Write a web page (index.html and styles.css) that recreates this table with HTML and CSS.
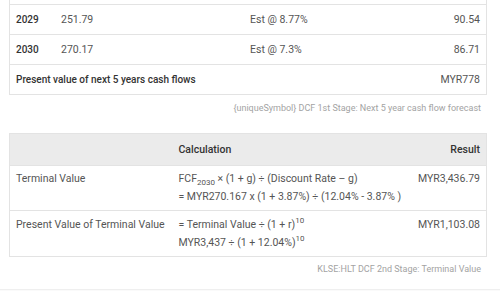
FILE: index.html
```html
<!DOCTYPE html>
<html>
<head>
<meta charset="utf-8">
<link rel="stylesheet" href="styles.css">
</head>
<body>
<div class="page">
  <div class="box">
    <table class="t1">
      <colgroup><col class="w1"><col class="w2"><col class="w3"><col></colgroup>
      <tr><td class="yr">2029</td><td class="val">251.79</td><td class="est">Est @ 8.77%</td><td class="num">90.54</td></tr>
      <tr><td class="yr">2030</td><td class="val">270.17</td><td class="est">Est @ 7.3%</td><td class="num">86.71</td></tr>
      <tr><td class="yr" colspan="3">Present value of next 5 years cash flows</td><td class="num">MYR778</td></tr>
    </table>
  </div>
  <div class="caption">{uniqueSymbol} DCF 1st Stage: Next 5 year cash flow forecast</div>

  <table class="t2">
    <colgroup><col class="v1"><col><col class="v3"></colgroup>
    <tr class="head"><th></th><th>Calculation</th><th class="r">Result</th></tr>
    <tr class="tv">
      <td>Terminal Value</td>
      <td>FCF<sub>2030</sub> × (1 + g) ÷ (Discount Rate – g)<br>= MYR270.167 x (1 + 3.87%) ÷ (12.04% - 3.87% )</td>
      <td class="r">MYR3,436.79</td>
    </tr>
    <tr class="pv">
      <td>Present Value of Terminal Value</td>
      <td>= Terminal Value ÷ (1 + r)<sup>10</sup><br>MYR3,437 ÷ (1 + 12.04%)<sup>10</sup></td>
      <td class="r">MYR1,103.08</td>
    </tr>
  </table>
  <div class="caption cap2">KLSE:HLT DCF 2nd Stage: Terminal Value</div>
</div>
<div class="foot"></div>
</body>
</html>
```
FILE: styles.css
```css
html, body { margin: 0; padding: 0; background: #fff; }
body { font-family: Roboto, "Liberation Sans", sans-serif; font-size: 10.5px; color: #555; }
.page { padding: 0 13px 0 9px; }
.box { border-left: 1px solid #e3e3e3; border-right: 1px solid #e3e3e3; padding-top: 4px; }
table { border-collapse: collapse; width: 100%; table-layout: fixed; }
.w1 { width: 45px; }
.w2 { width: 189px; }
.w3 { width: 140px; }
.t1 td { height: 29px; padding: 0 6px; border-top: 1px solid #e3e3e3; border-bottom: 1px solid #e3e3e3; vertical-align: middle; white-space: nowrap; }
.t1 .yr { font-weight: 500; color: #333; font-size: 10px; }
.t1 .num { text-align: right; }
.caption { text-align: right; font-size: 9px; color: #a3a3a3; padding: 8px 6px 0 0; height: 38px; box-sizing: border-box; }
.t2 { border: 1px solid #e3e3e3; }
.v1 { width: 163px; }
.v3 { width: 90px; }
.t2 th { background: #ebebeb; font-weight: 500; color: #333; height: 31px; padding: 0 6px; text-align: left; vertical-align: middle; }
.t2 .r { text-align: right; }
.t2 td { vertical-align: top; line-height: 18px; border-top: 1px solid #e3e3e3; white-space: nowrap; padding: 0 6px; }
.t2 .tv td { padding-top: 4px; padding-bottom: 4px; }
.t2 .pv td { padding-top: 5px; padding-bottom: 4px; }
sub, sup { font-size: 8px; line-height: 0; }
sub { vertical-align: -3px; }
sup { vertical-align: 5px; }
.cap2 { padding-top: 7px; height: 32px; }
.foot { border-top: 1px solid #efefef; background: #fafafa; height: 10px; }
```
